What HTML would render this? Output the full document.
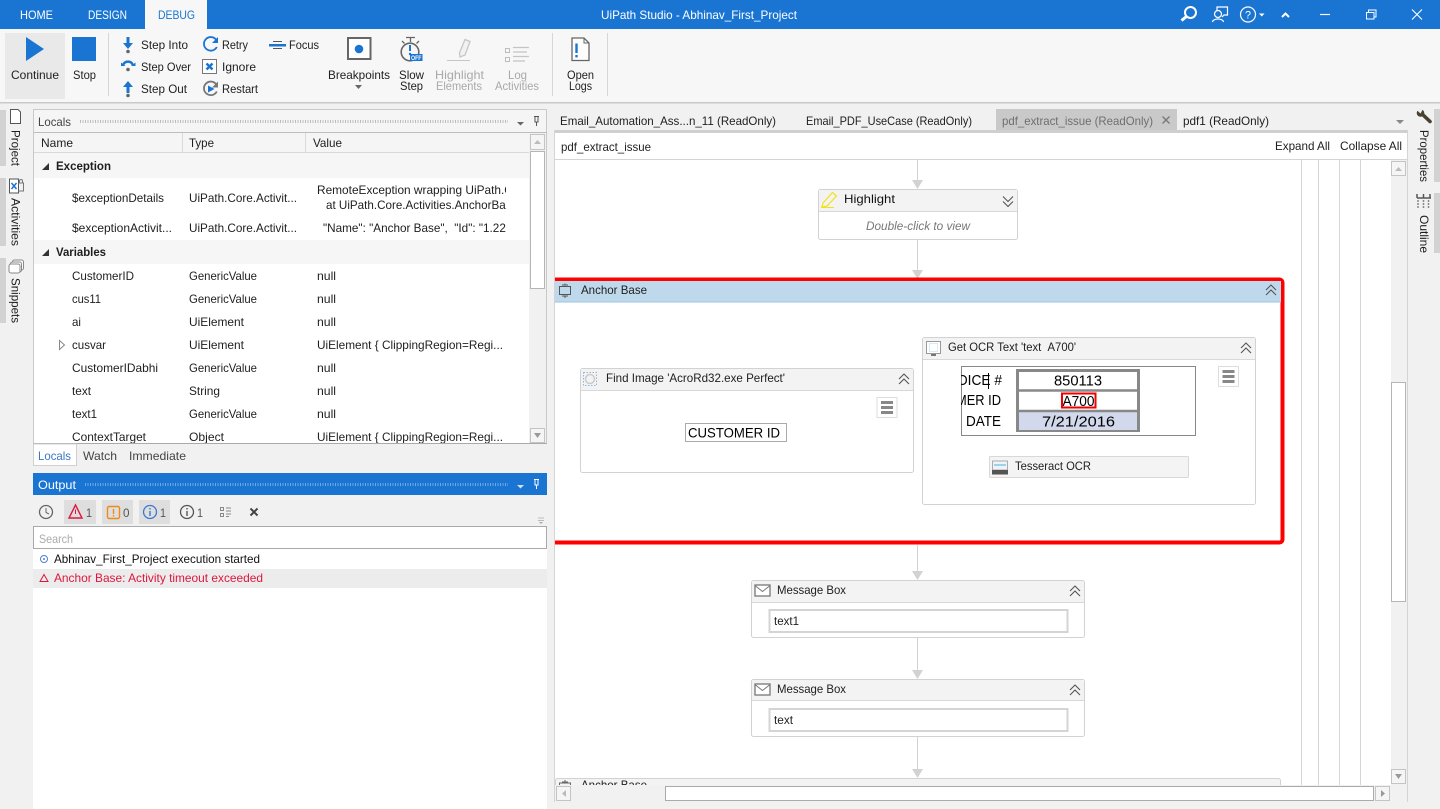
<!DOCTYPE html>
<html lang="en"><head><meta charset="utf-8"><title>UiPath Studio</title>
<style>
html,body{margin:0;padding:0;width:1440px;height:809px;overflow:hidden;background:#f1f1f1}
svg{display:block;font-family:"Liberation Sans",sans-serif;font-size:12px}
text{fill:#1e1e1e}
.w{fill:#fff}.b{font-weight:bold}.g{fill:#a9a9a9}
</style></head><body>
<svg width="1440" height="809" viewBox="0 0 1440 809" xmlns="http://www.w3.org/2000/svg">
<defs>
<clipPath id="c1"><rect x="34" y="133" width="472" height="311"/></clipPath>
<clipPath id="c2"><rect x="961" y="367" width="55" height="68"/></clipPath>
<clipPath id="c3"><rect x="555" y="160" width="836" height="625"/></clipPath>
<g id="chev"><path d="M-5 0L0-5L5 0M-5 5L0 0L5 5" fill="none" stroke="#555" stroke-width="1.1"/></g>
<g id="menu"><rect x="-10" y="-10" width="20" height="20" fill="#fff" stroke="#ddd"/><rect x="-6" y="-6.500" width="12" height="3" fill="#888"/><rect x="-6" y="-1.500" width="12" height="3" fill="#888"/><rect x="-6" y="3.500" width="12" height="3" fill="#888"/></g>
<g id="mail"><rect x="0" y="0" width="15" height="11" fill="#fff" stroke="#777" stroke-width="1.300"/><path d="M0.500 1L7.500 6.500L14.500 1" fill="none" stroke="#777"/></g>
<path id="arr" d="M-5.500-9H5.500L0 0Z" fill="#d2d2d2"/>
</defs>

<rect width="1440" height="809" fill="#f1f1f1"/>

<!-- title bar -->
<rect width="1440" height="29" fill="#1a75d2"/>
<rect x="145" width="62" height="29" fill="#f7f7f7"/>
<text class="w" x="20" y="19" textLength="33" lengthAdjust="spacingAndGlyphs">HOME</text>
<text class="w" x="88" y="19" textLength="39" lengthAdjust="spacingAndGlyphs">DESIGN</text>
<text x="158" y="19" textLength="37" lengthAdjust="spacingAndGlyphs" style="fill:#1a75d2">DEBUG</text>
<text class="w" x="601" y="19" textLength="196" lengthAdjust="spacingAndGlyphs">UiPath Studio - Abhinav_First_Project</text>
<g fill="none" stroke="#fff">
<circle cx="1190.500" cy="12.500" r="5.500" stroke-width="2"/><path d="M1186.500 16.500L1181.500 20.500" stroke-width="3"/>
<path d="M1217 11V7H1227.500V15H1224L1222 17" stroke-width="1.200"/><circle cx="1218" cy="14" r="3.500" stroke-width="1.200"/><path d="M1212.500 22C1213 18 1223 18 1223.500 22" stroke-width="1.200"/>
<circle cx="1248" cy="14.500" r="7.500" stroke-width="1.200"/>
<path d="M1282 17L1285.500 13.500L1289 17" stroke-width="2"/>
<path d="M1320 14.500H1330" stroke-width="1.200"/>
<path d="M1366.500 12.500H1374V19H1366.500ZM1368.500 12V10H1376V17H1374.500" stroke-width="1"/>
<path d="M1412 9.500L1422 19.500M1422 9.500L1412 19.500" stroke-width="1.100"/>
</g>
<text class="w" x="1245" y="18.500" textLength="6" lengthAdjust="spacingAndGlyphs" style="font-size:11px">?</text>
<path d="M1259 13.500H1264.500L1261.800 16.500Z" fill="#fff"/>

<!-- ribbon -->
<rect y="29" width="1440" height="73" fill="#f7f7f7"/>
<rect y="102" width="1440" height="1.500" fill="#c9c9c9"/>
<rect x="5" y="33" width="60" height="66" fill="#e9e9e9"/>
<path d="M26 37L44 49L26 61Z" fill="#1a75d2"/>
<rect x="72" y="37" width="24" height="24" fill="#1a75d2"/>
<text x="11" y="79" textLength="48" lengthAdjust="spacingAndGlyphs">Continue</text>
<text x="73" y="79" textLength="23" lengthAdjust="spacingAndGlyphs">Stop</text>
<path d="M108.500 33V96M552.500 33V96M607.500 33V96" stroke="#d6d6d6"/>

<!-- debug step icons -->
<path d="M126.500 37H129.500V43H133L128 49L123 43H126.500Z" fill="#1a75d2"/><circle cx="128" cy="51.500" r="1.800" fill="#666"/>
<path d="M123 65C125 60.500 131 60.500 133 65" fill="none" stroke="#1a75d2" stroke-width="2.400"/><path d="M121 62.500L125.500 66H121Z" fill="#1a75d2"/><path d="M135.500 62.500L131 66H135.500Z" fill="#1a75d2"/><circle cx="128" cy="69.500" r="1.800" fill="#666"/>
<path d="M126.500 93H129.500V87H133L128 81L123 87H126.500Z" fill="#1a75d2"/><circle cx="128" cy="95.500" r="1.800" fill="#666"/>
<text x="141" y="49" textLength="47" lengthAdjust="spacingAndGlyphs">Step Into</text>
<text x="141" y="71" textLength="50" lengthAdjust="spacingAndGlyphs">Step Over</text>
<text x="141" y="93" textLength="46" lengthAdjust="spacingAndGlyphs">Step Out</text>
<path d="M216 39.500A6.800 6.800 0 1 0 216.800 47" fill="none" stroke="#1a75d2" stroke-width="1.800"/><path d="M218 37V43H212Z" fill="#1a75d2"/>
<rect x="202.500" y="59.500" width="14" height="14" fill="#fff" stroke="#777"/><path d="M206.500 63.500L212.500 69.500M212.500 63.500L206.500 69.500" stroke="#1a75d2" stroke-width="2.400"/>
<path d="M216 84A6.800 6.800 0 1 0 216.800 91.500" fill="none" stroke="#777" stroke-width="1.800"/><path d="M218 81.500V87.500H212Z" fill="#777"/><path d="M208 85.500L214.500 89L208 92.500Z" fill="#1a75d2"/>
<text x="222" y="49" textLength="26" lengthAdjust="spacingAndGlyphs">Retry</text>
<text x="222" y="71" textLength="34" lengthAdjust="spacingAndGlyphs">Ignore</text>
<text x="222" y="93" textLength="36" lengthAdjust="spacingAndGlyphs">Restart</text>
<rect x="269" y="44" width="17" height="2.500" fill="#1a75d2"/><path d="M273 41.500H282M273 48.500H282" stroke="#555"/>
<text x="289" y="49" textLength="30" lengthAdjust="spacingAndGlyphs">Focus</text>

<!-- breakpoints etc. -->
<rect x="348" y="38" width="22.500" height="21" fill="#fff" stroke="#666" stroke-width="2"/><circle cx="359" cy="49" r="4.300" fill="#1a75d2"/>
<text x="328" y="79" textLength="62" lengthAdjust="spacingAndGlyphs">Breakpoints</text>
<path d="M355 85H362L358.500 89Z" fill="#666"/>
<circle cx="410" cy="52" r="8.800" fill="none" stroke="#666" stroke-width="1.600"/><path d="M406 37.500H415M410.500 37.500V42M402 41L404.500 43.500M419 41L416.500 43.500" stroke="#666" stroke-width="1.300"/><path d="M410 45V51" stroke="#1a75d2" stroke-width="2"/><circle cx="410" cy="54" r="1.200" fill="#1a75d2"/>
<rect x="410" y="54" width="12.500" height="7" fill="#1a75d2"/>
<text class="w b" x="411" y="60" textLength="10.500" lengthAdjust="spacingAndGlyphs" style="font-size:6px">OFF</text>
<text x="399" y="79" textLength="25" lengthAdjust="spacingAndGlyphs">Slow</text>
<text x="400" y="90" textLength="23" lengthAdjust="spacingAndGlyphs">Step</text>
<path d="M459.500 53L465 39.500L470 41.500L465 55L460 57L459.500 53Z" fill="#f2f2f2" stroke="#c6c6c6" stroke-width="1.300"/><path d="M447 60.500H470" stroke="#c6c6c6"/>
<text class="g" x="435" y="79" textLength="49" lengthAdjust="spacingAndGlyphs">Highlight</text>
<text class="g" x="436" y="90" textLength="46" lengthAdjust="spacingAndGlyphs">Elements</text>
<g fill="none" stroke="#bdbdbd"><rect x="505.500" y="48.500" width="4" height="4"/><rect x="505.500" y="57.500" width="4" height="4"/></g>
<path d="M513 47.500H529M513 52H527M513 56.500H529M513 61H525" stroke="#c4c4c4" stroke-width="1.200"/>
<text class="g" x="508" y="79" textLength="19" lengthAdjust="spacingAndGlyphs">Log</text>
<text class="g" x="495" y="90" textLength="44" lengthAdjust="spacingAndGlyphs">Activities</text>
<path d="M572 38H584L589 43V60.500H572Z" fill="#fdfdfd" stroke="#666" stroke-width="1.300"/><path d="M584 38V43H589" fill="none" stroke="#666"/>
<path d="M576.500 43.500V53" stroke="#1a75d2" stroke-width="2.400"/><rect x="575.300" y="55" width="2.400" height="2.400" fill="#1a75d2"/>
<text x="567" y="79" textLength="27" lengthAdjust="spacingAndGlyphs">Open</text>
<text x="569" y="90" textLength="23" lengthAdjust="spacingAndGlyphs">Logs</text>

<!-- left side strip -->
<rect y="110" width="6" height="56" fill="#d2d2d2"/>
<rect y="178" width="6" height="68" fill="#d2d2d2"/>
<rect y="258" width="6" height="65" fill="#d2d2d2"/>
<path d="M10.500 109.500H18L20.500 112V123.500H10.500Z" fill="#fff" stroke="#555"/>
<text transform="translate(11.500,130) rotate(90)" textLength="36" lengthAdjust="spacingAndGlyphs">Project</text>
<rect x="9.500" y="179" width="9" height="14" fill="#fff" stroke="#555"/><path d="M11.500 183L16.500 189M16.500 183L11.500 189" stroke="#1a75d2" stroke-width="1.500"/>
<path d="M18.500 183H23.500V191H18.500M19.500 183V181A1.500 1.500 0 0 1 22.500 181V183" fill="none" stroke="#777"/>
<text transform="translate(11.500,198) rotate(90)" textLength="48" lengthAdjust="spacingAndGlyphs">Activities</text>
<g fill="#fff" stroke="#888"><rect x="12.500" y="260" width="11" height="10" rx="2"/><rect x="10.500" y="262" width="11" height="10" rx="2"/><rect x="9" y="264" width="11" height="9" rx="2"/></g>
<text transform="translate(11.500,278) rotate(90)" textLength="45" lengthAdjust="spacingAndGlyphs">Snippets</text>

<!-- locals panel -->
<rect x="33.500" y="109.500" width="513" height="334" fill="#fff" stroke="#c9c9c9"/>
<rect x="34" y="110" width="512" height="22" fill="#f5f5f5"/>
<path d="M34 132.500H547" stroke="#bdbdbd"/>
<text x="38" y="126" textLength="33" lengthAdjust="spacingAndGlyphs" style="fill:#444">Locals</text>
<path d="M80 121.500H508" stroke="#bbb" stroke-width="3" stroke-dasharray="1 1.500"/>
<path d="M517 122H524L520.500 125.500Z" fill="#666"/>
<path d="M534 116.500H539M535 116.500V122H538V116.500M536.500 122V126" fill="none" stroke="#555"/>
<rect x="34" y="133" width="496" height="19" fill="#f5f5f5"/>
<path d="M34 152.500H530M182.500 133V152M305.500 133V152" stroke="#d9d9d9"/>
<text x="41" y="147" textLength="32" lengthAdjust="spacingAndGlyphs">Name</text>
<text x="189" y="147" textLength="25" lengthAdjust="spacingAndGlyphs">Type</text>
<text x="313" y="147" textLength="29" lengthAdjust="spacingAndGlyphs">Value</text>
<rect x="34" y="153" width="496" height="25" fill="#f6f6f6"/>
<rect x="34" y="240" width="496" height="24" fill="#f6f6f6"/>
<path d="M42 170H49V163Z" fill="#333"/><path d="M42 256H49V249Z" fill="#333"/>
<text class="b" x="56" y="170" textLength="55" lengthAdjust="spacingAndGlyphs">Exception</text>
<text class="b" x="56" y="256" textLength="50" lengthAdjust="spacingAndGlyphs">Variables</text>
<g clip-path="url(#c1)">
<text x="72" y="202" textLength="92" lengthAdjust="spacingAndGlyphs">$exceptionDetails</text>
<text x="189" y="202" textLength="108" lengthAdjust="spacingAndGlyphs">UiPath.Core.Activit...</text>
<text x="317" y="194" textLength="213" lengthAdjust="spacingAndGlyphs">RemoteException wrapping UiPath.Core</text>
<text x="326" y="209" textLength="192" lengthAdjust="spacingAndGlyphs">at UiPath.Core.Activities.AnchorBase</text>
<text x="72" y="232" textLength="100" lengthAdjust="spacingAndGlyphs">$exceptionActivit...</text>
<text x="189" y="232" textLength="108" lengthAdjust="spacingAndGlyphs">UiPath.Core.Activit...</text>
<text x="323" y="232" textLength="187" lengthAdjust="spacingAndGlyphs">"Name": "Anchor Base",&#160;&#160;"Id": "1.22"</text>
<text x="72" y="280" textLength="62" lengthAdjust="spacingAndGlyphs">CustomerID</text>
<text x="189" y="280" textLength="68" lengthAdjust="spacingAndGlyphs">GenericValue</text>
<text x="317" y="280" textLength="19" lengthAdjust="spacingAndGlyphs">null</text>
<text x="72" y="303" textLength="29" lengthAdjust="spacingAndGlyphs">cus11</text>
<text x="189" y="303" textLength="68" lengthAdjust="spacingAndGlyphs">GenericValue</text>
<text x="317" y="303" textLength="19" lengthAdjust="spacingAndGlyphs">null</text>
<text x="72" y="326" textLength="9" lengthAdjust="spacingAndGlyphs">ai</text>
<text x="189" y="326" textLength="55" lengthAdjust="spacingAndGlyphs">UiElement</text>
<text x="317" y="326" textLength="19" lengthAdjust="spacingAndGlyphs">null</text>
<path d="M59.500 340.500L64.500 345L59.500 349.500Z" fill="#fff" stroke="#888"/>
<text x="72" y="349" textLength="34" lengthAdjust="spacingAndGlyphs">cusvar</text>
<text x="189" y="349" textLength="55" lengthAdjust="spacingAndGlyphs">UiElement</text>
<text x="317" y="349" textLength="186" lengthAdjust="spacingAndGlyphs">UiElement { ClippingRegion=Regi...</text>
<text x="72" y="372" textLength="86" lengthAdjust="spacingAndGlyphs">CustomerIDabhi</text>
<text x="189" y="372" textLength="68" lengthAdjust="spacingAndGlyphs">GenericValue</text>
<text x="317" y="372" textLength="19" lengthAdjust="spacingAndGlyphs">null</text>
<text x="72" y="395" textLength="19" lengthAdjust="spacingAndGlyphs">text</text>
<text x="189" y="395" textLength="31" lengthAdjust="spacingAndGlyphs">String</text>
<text x="317" y="395" textLength="19" lengthAdjust="spacingAndGlyphs">null</text>
<text x="72" y="418" textLength="25" lengthAdjust="spacingAndGlyphs">text1</text>
<text x="189" y="418" textLength="68" lengthAdjust="spacingAndGlyphs">GenericValue</text>
<text x="317" y="418" textLength="19" lengthAdjust="spacingAndGlyphs">null</text>
<text x="72" y="441" textLength="74" lengthAdjust="spacingAndGlyphs">ContextTarget</text>
<text x="189" y="441" textLength="35" lengthAdjust="spacingAndGlyphs">Object</text>
<text x="317" y="441" textLength="186" lengthAdjust="spacingAndGlyphs">UiElement { ClippingRegion=Regi...</text>
</g>
<!-- locals scrollbar -->
<rect x="529" y="133" width="17" height="310" fill="#f1f1f1"/>
<rect x="530.500" y="134.500" width="14" height="15" fill="#f5f5f5" stroke="#c4c4c4"/>
<path d="M534 144H541L537.500 140Z" fill="#bbb"/>
<rect x="530.500" y="151.500" width="14" height="137" fill="#fff" stroke="#b5b5b5"/>
<rect x="530.500" y="428.500" width="14" height="14" fill="#f5f5f5" stroke="#c4c4c4"/>
<path d="M534 433H541L537.500 438Z" fill="#999"/>
<!-- locals tabs -->
<path d="M33 443.500H547" stroke="#aaa"/>
<rect x="33.500" y="444" width="43" height="21.500" fill="#fff" stroke="#d0d0d0"/>
<text x="38" y="460" textLength="33" lengthAdjust="spacingAndGlyphs" style="fill:#3a78c4">Locals</text>
<text x="83" y="460" textLength="34" lengthAdjust="spacingAndGlyphs" style="fill:#444">Watch</text>
<text x="129" y="460" textLength="57" lengthAdjust="spacingAndGlyphs" style="fill:#444">Immediate</text>

<!-- output panel -->
<rect x="33" y="473" width="514" height="336" fill="#fff"/>
<rect x="33" y="473" width="514" height="22" fill="#1a75d2"/>
<text class="w" x="38" y="489" textLength="38" lengthAdjust="spacingAndGlyphs">Output</text>
<path d="M85 484.500H508" stroke="#6fa9e4" stroke-width="3" stroke-dasharray="1 1.500"/>
<path d="M517 485H524L520.500 488.500Z" fill="#cde0f5"/>
<path d="M534 479.500H539M535 479.500V485H538V479.500M536.500 485V489" fill="none" stroke="#fff"/>
<rect x="33" y="495" width="514" height="31" fill="#f1f1f1"/>
<circle cx="46" cy="512" r="6.500" fill="none" stroke="#666" stroke-width="1.300"/><path d="M46 508V512.500L49 514" fill="none" stroke="#666"/>
<rect x="64" y="500" width="32" height="24" fill="#dedede"/>
<path d="M75.500 505L82 518H69Z" fill="none" stroke="#e0163c" stroke-width="1.400"/><path d="M75.500 509.500V514" stroke="#e0163c"/>
<text x="86" y="517" textLength="6" lengthAdjust="spacingAndGlyphs" style="fill:#555">1</text>
<rect x="102" y="500" width="31" height="24" fill="#dedede"/>
<rect x="107.500" y="506.500" width="12" height="12" rx="1.500" fill="none" stroke="#ef8a1c" stroke-width="1.400"/><path d="M113.500 509V514M113.500 515V516.500" stroke="#ef8a1c" stroke-width="1.400"/>
<text x="123" y="517" textLength="6.500" lengthAdjust="spacingAndGlyphs" style="fill:#555">0</text>
<rect x="139" y="500" width="31" height="24" fill="#dedede"/>
<circle cx="150" cy="512" r="6.500" fill="none" stroke="#3a78d4" stroke-width="1.300"/><path d="M150 511V516M150 508V509.500" stroke="#3a78d4" stroke-width="1.400"/>
<text x="160" y="517" textLength="6" lengthAdjust="spacingAndGlyphs" style="fill:#555">1</text>
<circle cx="187" cy="512" r="6.500" fill="none" stroke="#555" stroke-width="1.300"/><path d="M187 511V516M187 508V509.500" stroke="#555" stroke-width="1.400"/>
<text x="197" y="517" textLength="6" lengthAdjust="spacingAndGlyphs" style="fill:#555">1</text>
<g fill="none" stroke="#888"><rect x="220.500" y="507.500" width="3" height="3"/><rect x="220.500" y="513.500" width="3" height="3"/><path d="M226 508H231M226 511H231M226 514H231M226 516.500H229"/></g>
<path d="M250.500 508.500L257.500 515.500M257.500 508.500L250.500 515.500" stroke="#444" stroke-width="2"/>
<path d="M538 518H544M538 520.500H544" stroke="#bbb"/><path d="M539 522H543L541 524Z" fill="#aaa"/>
<rect x="33.500" y="526.500" width="513" height="22" fill="#fff" stroke="#aaa"/>
<text x="39" y="543" textLength="34" lengthAdjust="spacingAndGlyphs" style="fill:#aaa">Search</text>
<rect x="33" y="569" width="514" height="19" fill="#ececec"/>
<circle cx="44" cy="559" r="3.500" fill="none" stroke="#4f7fd4"/><circle cx="44" cy="559" r="1" fill="#4f7fd4"/>
<text x="54" y="563" textLength="206" lengthAdjust="spacingAndGlyphs" style="fill:#111">Abhinav_First_Project execution started</text>
<path d="M44 574.500L48 581.500H40Z" fill="none" stroke="#e0163c"/>
<text x="54" y="582" textLength="209" lengthAdjust="spacingAndGlyphs" style="fill:#e0163c">Anchor Base: Activity timeout exceeded</text>

<!-- document tabs -->
<rect x="996" y="109" width="181" height="21" fill="#c9c9c9"/>
<text x="560" y="125" textLength="216" lengthAdjust="spacingAndGlyphs">Email_Automation_Ass...n_11 (ReadOnly)</text>
<text x="806" y="125" textLength="166" lengthAdjust="spacingAndGlyphs">Email_PDF_UseCase (ReadOnly)</text>
<text x="1002" y="125" textLength="151" lengthAdjust="spacingAndGlyphs" style="fill:#6f6f6f">pdf_extract_issue (ReadOnly)</text>
<path d="M1162.500 116.500L1169.500 123.500M1169.500 116.500L1162.500 123.500" stroke="#777" stroke-width="1.300"/>
<text x="1183" y="125" textLength="86" lengthAdjust="spacingAndGlyphs">pdf1 (ReadOnly)</text>
<path d="M1396 120H1404L1400 124Z" fill="#888"/>

<!-- designer -->
<rect x="554" y="130" width="853" height="3" fill="#cfcfcf"/>
<rect x="554.500" y="133" width="853" height="669" fill="#fff"/>
<path d="M554.500 130V802M1407.500 130V802" stroke="#d4d4d4"/>
<text x="561" y="151" textLength="90" lengthAdjust="spacingAndGlyphs" style="fill:#222">pdf_extract_issue</text>
<text x="1275" y="150" textLength="55" lengthAdjust="spacingAndGlyphs">Expand All</text>
<text x="1340" y="150" textLength="62" lengthAdjust="spacingAndGlyphs">Collapse All</text>
<path d="M555 159.500H1407" stroke="#d4d4d4"/>
<path d="M1301.500 160V785M1318.500 160V785M1339.500 160V785M1360.500 160V785" stroke="#d6d6d6"/>

<g clip-path="url(#c3)">
<path d="M917.500 160V180" stroke="#d2d2d2"/><use href="#arr" x="917.500" y="189"/>
<rect x="818.500" y="189.500" width="199" height="50" rx="2" fill="#fff" stroke="#d2d2d2"/>
<rect x="819" y="190" width="198" height="21" fill="#f3f3f3"/><path d="M819 211.500H1017" stroke="#d8d8d8"/>
<path d="M823 203L832.500 192.500L836.500 196L827 206L822 207Z" fill="none" stroke="#f2e21c" stroke-width="1.200"/><path d="M821 207.500H834" stroke="#f2e21c"/>
<text x="844" y="203" textLength="51" lengthAdjust="spacingAndGlyphs" style="fill:#111">Highlight</text>
<g transform="translate(1008,201.500) scale(1,-1)"><use href="#chev"/></g>
<text x="866" y="230" textLength="104" lengthAdjust="spacingAndGlyphs" style="fill:#777;font-style:italic">Double-click to view</text>
<path d="M917.500 240V270" stroke="#d2d2d2"/><use href="#arr" x="917.500" y="279"/>

<!-- Anchor Base -->
<rect x="540" y="279.500" width="742.500" height="263" rx="3" fill="#fff" stroke="#f00" stroke-width="4"/>
<rect x="555" y="281" width="726" height="21" fill="#bfd9ec"/><path d="M555 302H1281" stroke="#9cc3e0"/>
<rect x="559.500" y="286.500" width="11" height="8" fill="none" stroke="#555"/><path d="M562 285H568M562 296H568M565 283.500V285M565 296V298" stroke="#555"/>
<text x="581" y="294" textLength="66" lengthAdjust="spacingAndGlyphs">Anchor Base</text>
<use href="#chev" x="1271" y="290"/>

<!-- Find image -->
<rect x="580.500" y="368.500" width="333" height="104" rx="2" fill="#fff" stroke="#d2d2d2"/>
<rect x="581" y="369" width="332" height="21" fill="#f3f3f3"/><path d="M581 390.500H913" stroke="#d8d8d8"/>
<rect x="583.500" y="372.500" width="13" height="13" fill="none" stroke="#8fb8de" stroke-dasharray="1.500 1.500"/><circle cx="590" cy="379" r="4.500" fill="none" stroke="#ccc" stroke-width="1.500"/>
<text x="606" y="382" textLength="179" lengthAdjust="spacingAndGlyphs">Find Image 'AcroRd32.exe Perfect'</text>
<use href="#chev" x="904" y="379"/>
<use href="#menu" x="887" y="407.500"/>
<rect x="685.500" y="423.500" width="101" height="18" fill="#fff" stroke="#aaa"/>
<text x="688" y="437.500" textLength="92" lengthAdjust="spacingAndGlyphs" style="font-size:14px;fill:#000">CUSTOMER ID</text>

<!-- Get OCR -->
<rect x="922.500" y="337.500" width="333" height="167" rx="2" fill="#fff" stroke="#d2d2d2"/>
<rect x="923" y="338" width="332" height="21" fill="#f3f3f3"/><path d="M923 359.500H1255" stroke="#d8d8d8"/>
<rect x="926.500" y="341.500" width="14" height="12" fill="#fff" stroke="#999"/><rect x="929.500" y="343.500" width="8" height="8" fill="none" stroke="#b8d4ec" stroke-dasharray="1 1"/><rect x="931" y="354" width="5" height="2" fill="#777"/>
<text x="948" y="351" textLength="128" lengthAdjust="spacingAndGlyphs">Get OCR Text 'text&#160;&#160;A700'</text>
<use href="#chev" x="1246" y="348"/>
<use href="#menu" x="1228.500" y="376.500"/>
<rect x="961.500" y="366.500" width="234" height="69" fill="#fff" stroke="#888"/>
<g clip-path="url(#c2)" style="font-size:14.500px">
<text x="957" y="385" textLength="45" lengthAdjust="spacingAndGlyphs" style="fill:#000">OICE #</text>
<path d="M988.500 373V389" stroke="#000"/>
<text x="946" y="405" textLength="55" lengthAdjust="spacingAndGlyphs" style="fill:#000">OMER ID</text>
<text x="966" y="426" textLength="35" lengthAdjust="spacingAndGlyphs" style="fill:#000">DATE</text>
</g>
<rect x="1017.500" y="370.500" width="121" height="60" fill="#fff" stroke="#888" stroke-width="3"/>
<rect x="1019" y="412" width="118" height="18" fill="#d3d9ec"/>
<path d="M1017 390.500H1139M1017 411H1139" stroke="#888" stroke-width="2.500"/>
<text x="1054" y="385.500" textLength="48" lengthAdjust="spacingAndGlyphs" style="font-size:14.500px;fill:#000">850113</text>
<text x="1062.500" y="406" textLength="32" lengthAdjust="spacingAndGlyphs" style="font-size:14.500px;fill:#000">A700</text>
<rect x="1062" y="393.500" width="33.500" height="14" fill="none" stroke="#e00" stroke-width="2"/>
<text x="1042" y="426.500" textLength="73" lengthAdjust="spacingAndGlyphs" style="font-size:14.500px;fill:#000">7/21/2016</text>
<rect x="989.500" y="456.500" width="199" height="21" rx="1" fill="#f4f4f4" stroke="#d8d8d8"/>
<rect x="992.500" y="461" width="15" height="9" fill="#eef3f8" stroke="#aaa"/><rect x="994" y="464" width="12" height="2" fill="#9ed0ee"/><rect x="992" y="470" width="16" height="4.500" fill="#555"/>
<text x="1015" y="470" textLength="76" lengthAdjust="spacingAndGlyphs">Tesseract OCR</text>

<path d="M917.500 545V571" stroke="#d2d2d2"/><use href="#arr" x="917.500" y="580"/>

<!-- Message boxes -->
<rect x="751.500" y="580.500" width="333" height="57" rx="2" fill="#fff" stroke="#d2d2d2"/>
<rect x="752" y="581" width="332" height="21" fill="#f3f3f3"/><path d="M752 602.500H1084" stroke="#d8d8d8"/>
<use href="#mail" x="755" y="585"/>
<text x="777" y="594" textLength="69" lengthAdjust="spacingAndGlyphs">Message Box</text>
<use href="#chev" x="1075" y="591"/>
<rect x="769.500" y="610" width="298" height="22" fill="#fff" stroke="#d4d4d4" stroke-width="2"/>
<text x="774" y="625" textLength="25" lengthAdjust="spacingAndGlyphs">text1</text>
<path d="M917.500 638V670" stroke="#d2d2d2"/><use href="#arr" x="917.500" y="679"/>
<rect x="751.500" y="679.500" width="333" height="57" rx="2" fill="#fff" stroke="#d2d2d2"/>
<rect x="752" y="680" width="332" height="20" fill="#f3f3f3"/><path d="M752 700.500H1084" stroke="#d8d8d8"/>
<use href="#mail" x="755" y="684"/>
<text x="777" y="693" textLength="69" lengthAdjust="spacingAndGlyphs">Message Box</text>
<use href="#chev" x="1075" y="690"/>
<rect x="769.500" y="709" width="298" height="22" fill="#fff" stroke="#d4d4d4" stroke-width="2"/>
<text x="774" y="724" textLength="19" lengthAdjust="spacingAndGlyphs">text</text>
<path d="M917.500 737V769" stroke="#d2d2d2"/><use href="#arr" x="917.500" y="778"/>
<rect x="555.500" y="778.500" width="725" height="30" rx="2" fill="#f3f3f3" stroke="#d2d2d2"/>
<path d="M562 782H568M565 780V782" stroke="#666"/><rect x="559.500" y="783" width="11" height="6" fill="none" stroke="#666"/>
<text x="581" y="789" textLength="66" lengthAdjust="spacingAndGlyphs">Anchor Base</text>
</g>

<!-- designer scrollbars -->
<rect x="1391" y="160" width="16" height="625" fill="#f1f1f1"/>
<rect x="1391.500" y="161.500" width="14" height="14" fill="#f5f5f5" stroke="#c4c4c4"/><path d="M1395 171H1402L1398.500 167Z" fill="#bbb"/>
<rect x="1391.500" y="382.500" width="14" height="219" fill="#fff" stroke="#b5b5b5"/>
<rect x="1391.500" y="769.500" width="14" height="14" fill="#f5f5f5" stroke="#c4c4c4"/><path d="M1395 774H1402L1398.500 779Z" fill="#999"/>
<rect x="555" y="785" width="852" height="17" fill="#f1f1f1"/>
<rect x="556.500" y="786.500" width="14" height="14" fill="#f5f5f5" stroke="#c4c4c4"/><path d="M566 790V797L562 793.500Z" fill="#bbb"/>
<rect x="665.500" y="786.500" width="708" height="14" fill="#fff" stroke="#aaa"/>
<rect x="1375.500" y="786.500" width="14" height="14" fill="#f5f5f5" stroke="#c4c4c4"/><path d="M1381 790V797L1385 793.500Z" fill="#999"/>

<!-- right side strip -->
<rect x="1434" y="109" width="6" height="73" fill="#d2d2d2"/>
<rect x="1434" y="193" width="6" height="60" fill="#d2d2d2"/>
<path d="M1421 113L1430 121.500" stroke="#4a4030" stroke-width="3.600" stroke-linecap="round"/><circle cx="1420.500" cy="113" r="3.800" fill="#4a4030"/><path d="M1416 109.500L1420.500 113.500L1423 109Z" fill="#f1f1f1"/>
<text transform="translate(1420,130) rotate(90)" textLength="52" lengthAdjust="spacingAndGlyphs">Properties</text>
<path d="M1417 194V198M1423.500 194V198M1430 194V198M1417 198H1431" stroke="#555" stroke-width="1.500"/><path d="M1418 200V208M1423.500 200V208M1428.500 200V208" stroke="#888" stroke-width="1.500" stroke-dasharray="2 1"/>
<text transform="translate(1420,215) rotate(90)" textLength="38" lengthAdjust="spacingAndGlyphs">Outline</text>
</svg>
</body></html>
